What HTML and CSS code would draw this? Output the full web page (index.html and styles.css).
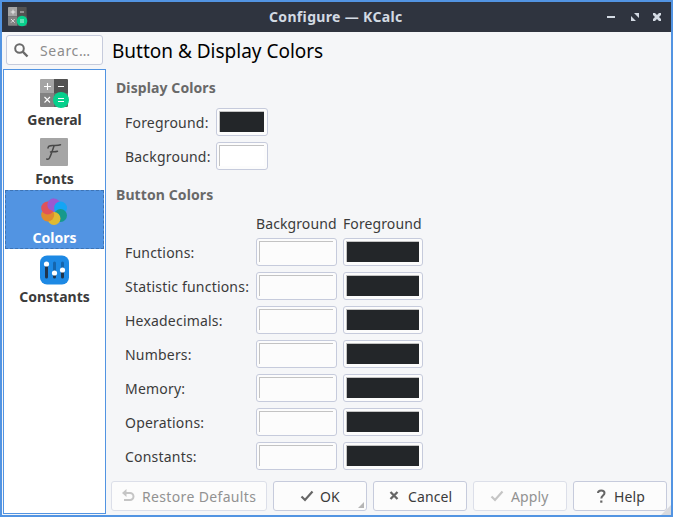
FILE: index.html
```
<!DOCTYPE html>
<html lang="en">
<head>
<meta charset="utf-8">
<title>Configure — KCalc</title>
<link rel="stylesheet" href="styles.css">
</head>
<body>
<svg class="defs" aria-hidden="true">
  <symbol id="calc" viewBox="0 0 30 30">
    <path fill="#a4a4a4" d="M0 1a1 1 0 0 1 1-1h13v14H0z"/>
    <path fill="#525252" d="M14 0h13a1 1 0 0 1 1 1v13H14z"/>
    <path fill="#828282" d="M0 14h14v14H1a1 1 0 0 1-1-1z"/>
    <path fill="#666" d="M14 14h14v13a1 1 0 0 1-1 1H14z"/>
    <circle cx="21" cy="21" r="8" fill="#06d08c"/>
    <path stroke="#fff" stroke-width="1.100" fill="none" d="M4 7.500h7M7.500 4v7M18 7.500h6M4.500 18l5.500 5.500M10 18l-5.500 5.500M18 19.500h6M18 22.500h6"/>
  </symbol>
</svg>
<div class="window">
  <header class="titlebar">
    <svg class="app-icon" viewBox="0 0 30 30"><use href="#calc"/></svg>
    <h1 class="title">Configure — KCalc</h1>
    <svg class="controls" viewBox="0 0 54 10">
      <path fill="#d3dae3" d="M0 4h8v2H0zM27 1h5v5zM24 4v5h5zM46 1h2l2 2 2-2h2v2l-2 2 2 2v2h-2l-2-2-2 2h-2V7l2-2-2-2z"/>
    </svg>
  </header>
  <div class="body">
    <aside class="side">
      <div class="search">
        <svg class="search-icon" viewBox="0 0 15 15"><g fill="none" stroke="#6a6a6a"><circle cx="5.500" cy="5.500" r="4.300" stroke-width="2"/><path d="M8.700 8.700l4.800 4.800" stroke-width="2.400"/></g></svg>
        <span class="search-text">Searc…</span>
      </div>
      <nav class="list">
        <div class="item"><svg class="icon" viewBox="0 0 30 30"><use href="#calc"/></svg><span class="name">General</span></div>
        <div class="item"><svg class="icon" viewBox="0 0 30 30"><rect width="28" height="28" rx="1" fill="#a5a5a5"/><path d="M8 10c0-2 2-2.600 4.500-2.600 3 0 5.500.3 8-.7M14 8c-1.500 4-2.500 8-4.500 12-.5 1-1.700 1.500-2.800 1M10.500 14c3-.5 4.500 0 7-.8" fill="none" stroke="#484848" stroke-width="1.500" stroke-linecap="round"/></svg><span class="name">Fonts</span></div>
        <div class="item selected"><svg class="icon" viewBox="0 0 30 30">
          <circle cx="14" cy="8" r="6.500" fill="#9b59d0"/><circle cx="20.500" cy="11" r="6.500" fill="#14a5f5"/><circle cx="20.500" cy="18.500" r="6.500" fill="#16998c"/><circle cx="14" cy="21.500" r="6.500" fill="#e0ba31"/><circle cx="7.700" cy="18" r="6.500" fill="#df8b2e"/><circle cx="7.700" cy="11" r="6.500" fill="#e15258"/><path d="M14 14.500L9 12.200A6.500 6.500 0 0 1 14 1.500z" fill="#9b59d0"/></svg><span class="name">Colors</span></div>
        <div class="item"><svg class="icon raised" viewBox="0 0 30 30"><rect y=".5" width="29" height="29" rx="7" fill="#1d89e4"/><g stroke-width="3" stroke-linecap="round"><path d="M6.500 9v13M14.500 18v4M22.500 15v7" stroke="#20354c"/><path d="M14.500 8v8M22.500 8v5" stroke="#1565ac"/></g><g fill="#fff"><circle cx="6.500" cy="9" r="2.600"/><circle cx="14.500" cy="18" r="2.600"/><circle cx="22.500" cy="15" r="2.600"/></g></svg><span class="name">Constants</span></div>
      </nav>
    </aside>
    <main class="page">
      <h2 class="heading">Button &amp; Display Colors</h2>
      <section class="group">
        <h3 class="group-title">Display Colors</h3>
        <div class="display-grid">
          <span class="label">Foreground:</span><div class="well"><i class="swatch dark"></i></div>
          <span class="label">Background:</span><div class="well"><i class="swatch white"></i></div>
        </div>
      </section>
      <section class="group">
        <h3 class="group-title">Button Colors</h3>
        <div class="button-grid">
          <span></span><span class="label column">Background</span><span class="label column">Foreground</span>
          <span class="label">Functions:</span><div class="well"><i class="swatch"></i></div><div class="well"><i class="swatch dark"></i></div>
          <span class="label">Statistic functions:</span><div class="well"><i class="swatch"></i></div><div class="well"><i class="swatch dark"></i></div>
          <span class="label">Hexadecimals:</span><div class="well"><i class="swatch"></i></div><div class="well"><i class="swatch dark"></i></div>
          <span class="label">Numbers:</span><div class="well"><i class="swatch"></i></div><div class="well"><i class="swatch dark"></i></div>
          <span class="label">Memory:</span><div class="well"><i class="swatch"></i></div><div class="well"><i class="swatch dark"></i></div>
          <span class="label">Operations:</span><div class="well"><i class="swatch"></i></div><div class="well"><i class="swatch dark"></i></div>
          <span class="label">Constants:</span><div class="well"><i class="swatch"></i></div><div class="well"><i class="swatch dark"></i></div>
        </div>
      </section>
      <footer class="actions">
        <button class="btn restore" disabled><svg class="bi" viewBox="0 0 14 14"><path d="M4 4h5a3.500 3.500 0 0 1 0 7H3" fill="none" stroke="currentColor" stroke-width="2"/><path d="M5.500 0v8L1 4z" fill="currentColor"/></svg><span class="bt">Restore Defaults</span></button>
        <button class="btn ok"><svg class="bi" viewBox="0 0 14 14"><path d="M1.500 7.500l3.500 3.500 7.500-8.500" fill="none" stroke="currentColor" stroke-width="2.200"/></svg><span class="bt">OK</span></button>
        <button class="btn cancel"><svg class="bi" viewBox="0 0 14 14"><path d="M3.500 3l7 7M10.500 3l-7 7" fill="none" stroke="currentColor" stroke-width="2.300"/></svg><span class="bt">Cancel</span></button>
        <button class="btn apply" disabled><svg class="bi" viewBox="0 0 14 14"><path d="M1.500 7.500l3.500 3.500 7.500-8.500" fill="none" stroke="currentColor" stroke-width="2.200"/></svg><span class="bt">Apply</span></button>
        <button class="btn help"><svg class="bi" viewBox="0 0 14 14"><path d="M4 4C4 .5 10.500.5 10.500 4 10.500 6.500 7.300 6.500 7.300 9.500" fill="none" stroke="currentColor" stroke-width="2"/><path d="M6.200 11.500h2.200v2.200H6.200z" fill="currentColor"/></svg><span class="bt">Help</span></button>
      </footer>
    </main>
  </div>
</div>
</body>
</html>
```
FILE: styles.css
```
* { box-sizing: border-box; }
body { margin: 0; font-family: "Noto Sans", sans-serif; font-size: 14px; color: #3b3b3b; }
.defs { position: absolute; width: 0; height: 0; }
.window { position: relative; width: 673px; height: 517px; border: 2px solid #5294e2; background: #f5f6f8; overflow: hidden; display: flex; flex-direction: column; }
.window::after { content: ""; position: absolute; right: 0; bottom: 0; border: 5px solid; border-color: transparent #d9dade #d9dade transparent; }
.titlebar { height: 30px; flex: none; background: #2f343f; display: flex; align-items: center; padding: 0 10px 0 6px; }
.app-icon { width: 20px; height: 20px; margin-right: 241px; flex: none; }
.title { margin: 0; font: bold 14px/28px "Noto Sans", sans-serif; color: #d3dae3; white-space: nowrap; letter-spacing: .34px; margin-top: -1px; }
.controls { width: 54px; height: 10px; margin-left: auto; margin-top: -1px; }
.body { flex: 1; display: flex; min-height: 0; }
.side { width: 105px; padding: 3px 0 0 1px; display: flex; flex-direction: column; flex: none; }
.search { width: 97px; height: 30px; margin-left: 3px; border: 1px solid #c6cbdc; border-radius: 3px; background: #fcfcfc; display: flex; align-items: center; padding-left: 7px; }
.search-icon { width: 15px; height: 15px; margin-right: 11px; flex: none; }
.search-text { color: #8c8c8c; letter-spacing: .65px; }
.list { flex: 1; margin-top: 4px; margin-bottom: 1px; width: 103px; border: 1px solid #5294e2; background: #fff; padding: 2px 1px; }
.item { height: 59px; padding: 7px 0 0 0; display: flex; flex-direction: column; align-items: center; }
.selected { background: #5294e2; color: #fff; outline: 1px dashed #3d73b4; outline-offset: -1px; }
.icon { width: 30px; height: 30px; margin-left: 1px; flex: none; }
.raised { margin-top: -1px; margin-bottom: 1px; }
.name { font-weight: bold; line-height: 20px; padding-top: 1px; white-space: nowrap; }
.page { flex: 1; display: flex; flex-direction: column; padding-left: 4px; min-width: 0; }
.heading { margin: 5px 0 0 1px; font-size: 19px; line-height: 28px; font-weight: 400; color: #000; white-space: nowrap; letter-spacing: -.01px; }
.group-title { margin: 0 0 0 5px; font-size: 14px; line-height: 20px; color: #696969; white-space: nowrap; letter-spacing: .1px; }
.group:nth-of-type(1) { margin-top: 13px; }
.group:nth-of-type(2) { margin-top: 15px; }
.display-grid, .button-grid { display: grid; column-gap: 6px; row-gap: 6px; margin-left: 14px; align-items: center; }
.display-grid { grid-template-columns: 85px 52px; margin-top: 10px; }
.button-grid { grid-template-columns: 125px 81px 80px; grid-template-rows: 20px; margin-top: 7px; }
.label { line-height: 20px; padding-top: 2px; white-space: nowrap; justify-self: start; letter-spacing: .2px; }
.column { padding-top: 0; height: 20px; line-height: 24px; letter-spacing: .1px; }
.well { height: 28px; border: 1px solid #c6cbdc; border-radius: 3px; background: #fcfcfc; padding: 2px 3px 3px 2px; }
.swatch { display: block; height: 21px; border: solid #c3c3c3; border-width: 1px 0 0 1px; background: #fcfcfc; }
.dark { background: #232629; }
.white { background: #fff; }
.actions { display: flex; gap: 6px; margin-top: auto; margin-bottom: 4px; }
.btn { height: 30px; width: 94px; padding: 0; border: 1px solid #c6cbdc; border-radius: 3px; background: #fcfcfc; font: 14px "Noto Sans", sans-serif; color: #3b3b3b; display: flex; align-items: center; position: relative; }
.bi { width: 14px; height: 14px; color: #666; flex: none; }
.bt { white-space: nowrap; letter-spacing: .1px; }
.btn:disabled { color: #929292; border-color: #dcdfe9; }
.btn:disabled .bi { color: #c5c5c5; }
.restore { width: 156px; padding-left: 9px; }
.restore .bt { margin-left: 7px; letter-spacing: .35px; }
.ok { padding-left: 26px; }
.ok .bt { margin-left: 6px; }
.ok::after { content: ""; position: absolute; right: 2px; bottom: 2px; border: 3.5px solid; border-color: transparent #b5b5b5 #b5b5b5 transparent; }
.cancel { padding-left: 13px; }
.cancel .bt { margin-left: 7px; }
.apply { padding-left: 16px; }
.apply .bt { margin-left: 7px; }
.help { padding-left: 20px; }
.help .bt { margin-left: 6px; }
```
